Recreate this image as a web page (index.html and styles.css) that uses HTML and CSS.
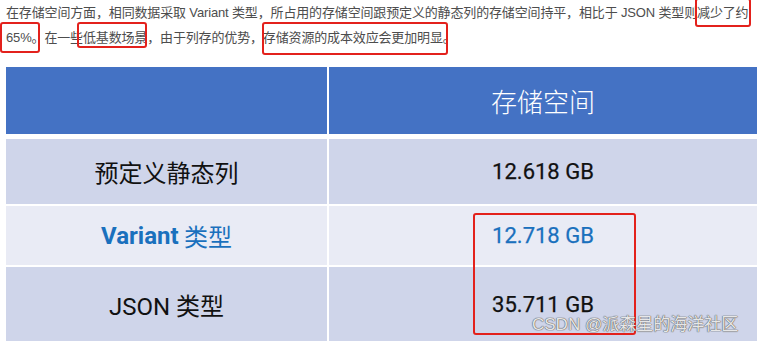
FILE: index.html
```html
<!DOCTYPE html>
<html lang="zh-CN">
<head>
  <meta charset="UTF-8" />
  <meta name="viewport" content="width=device-width, initial-scale=1.0">
  <title>存储空间对比</title>
  <link rel="stylesheet" href="styles.css">
</head>
<body>

  <div class="page">
    <p class="intro">在存储空间方面，相同数据采取 Variant 类型，所占用的存储空间跟预定义的静态列的存储空间持平，相比于 JSON 类型则减少了约<br>65%。在一些低基数场景，由于列存的优势，存储资源的成本效应会更加明显。</p>

    <!-- 存储空间对比表 -->
    <div class="table">
      <div class="cell head"></div>
      <div class="cell head">存储空间</div>

      <div class="cell odd name">预定义静态列</div>
      <div class="cell odd value">12.618 GB</div>

      <div class="cell even name variant"><b>Variant</b>&nbsp;类型</div>
      <div class="cell even value variant">12.718 GB</div>

      <div class="cell odd name last">JSON 类型</div>
      <div class="cell odd value last">35.711 GB</div>
    </div>

    <!-- 红框标注 -->
    <div class="mark" style="left: 0; top: 22px; width: 40px; height: 31px;"></div>
    <div class="mark" style="left: 77px; top: 22px; width: 70px; height: 26px;"></div>
    <div class="mark" style="left: 262px; top: 22px; width: 186px; height: 33px;"></div>
    <div class="mark" style="left: 695px; top: -2px; width: 56px; height: 29px;"></div>
    <div class="mark" style="left: 473px; top: 213px; width: 163px; height: 122px;"></div>

    <div class="watermark">CSDN @派森星的海洋社区</div>
  </div>

</body>
</html>
```

FILE: styles.css
```css
* {
  margin: 0;
  padding: 0;
  box-sizing: border-box;
}

body {
  background: #fff;
  font-family: "Noto Sans CJK SC", "Noto Sans", sans-serif;
  overflow: hidden;
}

.page {
  position: relative;
  padding: 0 3px 0 6px;
  height: 341px;
}

.intro {
  font-family: "Liberation Sans", "Noto Sans CJK SC", sans-serif;
  font-size: 13px;
  line-height: 25px;
  letter-spacing: -0.15px;
  color: #4d4d4d;
  margin-bottom: 17px;
  white-space: nowrap;
}

/* 表格 */
.table {
  display: grid;
  grid-template-columns: 321px 428px;
  grid-template-rows: 70px 65px 59px 74px;
  column-gap: 2px;
  row-gap: 2px;
  width: 751px;
}

.cell {
  display: flex;
  align-items: center;
  justify-content: center;
  color: #111;
}

.head {
  background: #4472c4;
  color: #fff;
  font-size: 26px;
  font-weight: 300;
  margin-bottom: 3px;
  padding-bottom: 1px;
}

.odd {
  background: #cfd5ea;
}

.even {
  background: #e9ebf5;
}

.name {
  font-size: 24px;
}

.value {
  font-family: Roboto, "Noto Sans", sans-serif;
  font-size: 22px;
  font-weight: 400;
  -webkit-text-stroke: 0.25px currentColor;
}

.variant {
  color: #1a70bd;
}

.variant b {
  font-family: Roboto, sans-serif;
  font-weight: 700;
}

.name.last {
  font-family: Roboto, "Noto Sans CJK SC", sans-serif;
}

/* 标注框 */
.mark {
  position: absolute;
  border: 2px solid #e3211c;
  border-radius: 3px;
}

.watermark {
  position: absolute;
  left: 532px;
  top: 310px;
  font-size: 17px;
  font-family: "Liberation Sans", "Noto Sans CJK SC", sans-serif;
  color: rgba(255, 255, 255, 0.85);
  text-shadow: 0 0 1px #666, 0 0 1px #666, 0 0 1px #666;
  white-space: nowrap;
}
```
